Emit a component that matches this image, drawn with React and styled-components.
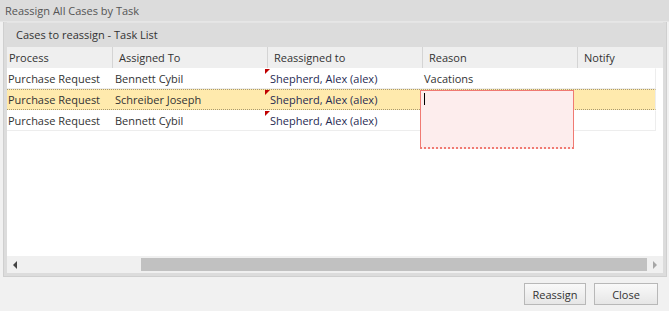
import React from 'react';
import styled, { createGlobalStyle } from 'styled-components';

const GlobalStyle = createGlobalStyle`
  html, body {
    margin: 0;
    padding: 0;
    background: #f1f1f1;
  }
  body {
    font-family: 'Open Sans', 'DejaVu Sans', sans-serif;
    font-size: 11px;
    color: #333;
  }
`;

const WindowStyled = styled.div`
  width: 669px;
  height: 311px;
  display: flex;
  flex-direction: column;
  background: #f1f1f1;
  overflow: hidden;
`;

const TitleBarStyled = styled.div`
  height: 21px;
  line-height: 21px;
  padding-left: 5px;
  background: #dcdcdc;
  color: #555;
  border-bottom: 1px solid #e6e6e6;
  flex: none;
`;

const BodyStyled = styled.div`
  padding: 0 2px 0 3px;
  flex: none;
`;

const PanelStyled = styled.div`
  background: #dcdcdc;
  border: 1px solid #cfcfcf;
  border-top: none;
  padding: 0 3px 3px 3px;
  display: flex;
  flex-direction: column;
`;

const PanelHeaderStyled = styled.div`
  height: 24px;
  line-height: 24px;
  padding-left: 9px;
  color: #333;
  border-top: 1px solid #e4e4e4;
`;

const GridStyled = styled.div`
  background: #fff;
  height: 226px;
  display: flex;
  flex-direction: column;
  position: relative;
`;

const HeaderRowStyled = styled.div`
  display: flex;
  height: 21px;
  background: #efefef;
  flex: none;
`;

const HeaderCellStyled = styled.div`
  width: ${(p) => p.$w}px;
  flex: ${(p) => (p.$grow ? '1' : 'none')};
  padding-left: ${(p) => p.$pad}px;
  line-height: 21px;
  color: #333;
  border-right: ${(p) => (p.$last ? 'none' : '1px solid #d4d4d4')};
  box-sizing: border-box;
  white-space: nowrap;
`;

const RowsStyled = styled.div`
  flex: 1;
  width: 649px;
`;

const RowStyled = styled.div`
  display: flex;
  height: 21px;
  box-sizing: border-box;
  background: ${(p) => (p.$selected ? '#ffeaad' : '#fff')};
  border-top: 1px ${(p) => (p.$selected ? 'dotted #a89a70' : 'solid transparent')};
  border-bottom: 1px ${(p) => (p.$selected ? 'dotted #a89a70' : 'solid #ededed')};
  border-right: 1px solid #ededed;
`;

const CellStyled = styled.div`
  width: ${(p) => p.$w}px;
  flex: ${(p) => (p.$grow ? '1' : 'none')};
  padding-left: ${(p) => p.$pad}px;
  line-height: 19px;
  box-sizing: border-box;
  white-space: nowrap;
  overflow: hidden;
  position: relative;
  color: ${(p) => (p.$user ? '#1f2a52' : '#333')};
`;

const DirtyMarkStyled = styled.span`
  position: absolute;
  left: 0;
  top: 0;
  width: 0;
  height: 0;
  border-top: 5px solid #c00000;
  border-right: 5px solid transparent;
`;

const EditorStyled = styled.div`
  position: absolute;
  left: 413px;
  top: 43px;
  width: 154px;
  height: 59px;
  box-sizing: border-box;
  background: #fdeded;
  border: 1px solid #f07a72;
  border-bottom: 2px dotted #f07a72;
`;

const CaretStyled = styled.span`
  position: absolute;
  left: 3px;
  top: 2px;
  width: 1px;
  height: 12px;
  background: #000;
`;

const ScrollBarStyled = styled.div`
  height: 17px;
  background: #f0f0f0;
  display: flex;
  align-items: center;
  flex: none;
`;

const ArrowStyled = styled.span`
  width: 0;
  height: 0;
  border-top: 4px solid transparent;
  border-bottom: 4px solid transparent;
  ${(p) =>
    p.$dir === 'left'
      ? `border-right: 4px solid #444; margin-left: 6px;`
      : `border-left: 4px solid #a6a6a6; margin-left: 6px;`}
`;

const TrackStyled = styled.div`
  flex: 1;
  height: 100%;
  display: flex;
  align-items: center;
  padding-left: 124px;
`;

const ThumbStyled = styled.div`
  flex: 1;
  height: 13px;
  background: #c1c1c1;
`;

const RightArrowBoxStyled = styled.div`
  width: 16px;
  display: flex;
  align-items: center;
`;

const FooterStyled = styled.div`
  flex: 1;
  display: flex;
  justify-content: flex-end;
  align-items: flex-start;
  gap: 8px;
  padding: 6px 11px 0 0;
`;

const ButtonStyled = styled.button`
  width: ${(p) => p.$w}px;
  height: 22px;
  font-family: 'Open Sans', 'DejaVu Sans', sans-serif;
  font-size: 11px;
  color: #333;
  background: linear-gradient(#f9f9f9, #e6e6e6);
  border: 1px solid #b8b8b8;
  border-radius: 0;
  padding: 0;
  cursor: pointer;
`;

const headers = [
  { label: 'Process', w: 106, pad: 2 },
  { label: 'Assigned To', w: 155, pad: 6 },
  { label: 'Reassigned to', w: 155, pad: 6 },
  { label: 'Reason', w: 155, pad: 6 },
  { label: 'Notify', w: 80, pad: 6, grow: true, last: true },
];

const rows = [
  { process: 'Purchase Request', assigned: 'Bennett Cybil', user: 'Shepherd, Alex (alex)', reason: 'Vacations' },
  { process: 'Purchase Request', assigned: 'Schreiber Joseph', user: 'Shepherd, Alex (alex)', reason: '', selected: true },
  { process: 'Purchase Request', assigned: 'Bennett Cybil', user: 'Shepherd, Alex (alex)', reason: '' },
];

export default function App() {
  return (
    <WindowStyled>
      <GlobalStyle />
      <TitleBarStyled>Reassign All Cases by Task</TitleBarStyled>
      <BodyStyled>
        <PanelStyled>
          <PanelHeaderStyled>Cases to reassign - Task List</PanelHeaderStyled>
          <GridStyled>
            <HeaderRowStyled>
              {headers.map((h) => (
                <HeaderCellStyled key={h.label} $w={h.w} $pad={h.pad} $grow={h.grow} $last={h.last}>
                  {h.label}
                </HeaderCellStyled>
              ))}
            </HeaderRowStyled>
            <RowsStyled>
              {rows.map((r, i) => (
                <RowStyled key={i} $selected={r.selected}>
                  <CellStyled $w={103} $pad={1}>{r.process}</CellStyled>
                  <CellStyled $w={155} $pad={5}>{r.assigned}</CellStyled>
                  <CellStyled $w={155} $pad={5} $user>
                    <DirtyMarkStyled />
                    {r.user}
                  </CellStyled>
                  <CellStyled $w={155} $pad={4}>{r.reason}</CellStyled>
                  <CellStyled $grow $pad={5} />
                </RowStyled>
              ))}
            </RowsStyled>
            <EditorStyled>
              <CaretStyled />
            </EditorStyled>
            <ScrollBarStyled>
              <ArrowStyled $dir="left" />
              <TrackStyled>
                <ThumbStyled />
              </TrackStyled>
              <RightArrowBoxStyled>
                <ArrowStyled $dir="right" />
              </RightArrowBoxStyled>
            </ScrollBarStyled>
          </GridStyled>
        </PanelStyled>
      </BodyStyled>
      <FooterStyled>
        <ButtonStyled $w={62}>Reassign</ButtonStyled>
        <ButtonStyled $w={64}>Close</ButtonStyled>
      </FooterStyled>
    </WindowStyled>
  );
}
